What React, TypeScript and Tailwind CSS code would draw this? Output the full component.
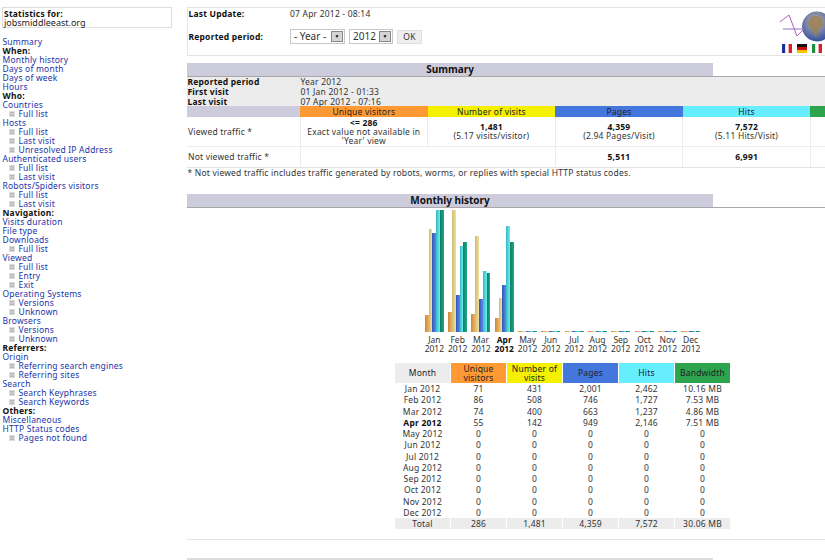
import React from "react";

const nav: [string, number][] = [
  ["Summary", 0], ["When:", 2], ["Monthly history", 0], ["Days of month", 0], ["Days of week", 0], ["Hours", 0],
  ["Who:", 2], ["Countries", 0], ["Full list", 1], ["Hosts", 0], ["Full list", 1], ["Last visit", 1],
  ["Unresolved IP Address", 1], ["Authenticated users", 0], ["Full list", 1], ["Last visit", 1],
  ["Robots/Spiders visitors", 0], ["Full list", 1], ["Last visit", 1], ["Navigation:", 2], ["Visits duration", 0],
  ["File type", 0], ["Downloads", 0], ["Full list", 1], ["Viewed", 0], ["Full list", 1], ["Entry", 1], ["Exit", 1],
  ["Operating Systems", 0], ["Versions", 1], ["Unknown", 1], ["Browsers", 0], ["Versions", 1], ["Unknown", 1],
  ["Referrers:", 2], ["Origin", 0], ["Referring search engines", 1], ["Referring sites", 1], ["Search", 0],
  ["Search Keyphrases", 1], ["Search Keywords", 1], ["Others:", 2], ["Miscellaneous", 0], ["HTTP Status codes", 0],
  ["Pages not found", 1],
];

const months = ["Jan", "Feb", "Mar", "Apr", "May", "Jun", "Jul", "Aug", "Sep", "Oct", "Nov", "Dec"];
const bars = [
  [17, 103, 99, 122, 122],
  [20, 122, 37, 86, 90],
  [18, 96, 33, 61, 59],
  [14, 34, 47, 106, 90],
];
const barClasses = [
  "bg-gradient-to-r from-[#c98a3c] to-[#f0b060]",
  "bg-gradient-to-r from-[#cdbb72] to-[#efe2a6]",
  "bg-gradient-to-r from-[#2f55b8] to-[#5f8ae8]",
  "bg-gradient-to-r from-[#35b8c0] to-[#6feef2]",
  "bg-gradient-to-r from-[#0e7f66] to-[#1fa888]",
];
const rows = [
  ["71", "431", "2,001", "2,462", "10.16 MB"],
  ["86", "508", "746", "1,727", "7.53 MB"],
  ["74", "400", "663", "1,237", "4.86 MB"],
  ["55", "142", "949", "2,146", "7.51 MB"],
];

function Mini() {
  return (
    <svg width="6" height="6" viewBox="0 0 6 6" className="mr-[4px] ml-[6px] shrink-0">
      <rect width="6" height="6" fill="#dcdcdc" />
      <path d="M1 1.5h4M1 3h4M1 4.5h4" stroke="#a8a8a8" strokeWidth="0.7" />
    </svg>
  );
}

function Flag({ a, b, c, row }: { a: string; b: string; c: string; row?: boolean }) {
  return (
    <svg width="10" height="9" viewBox="0 0 10 9">
      {row ? (
        <>
          <rect width="10" height="3" fill={a} />
          <rect y="3" width="10" height="3" fill={b} />
          <rect y="6" width="10" height="3" fill={c} />
        </>
      ) : (
        <>
          <rect width="3.4" height="9" fill={a} />
          <rect x="3.4" width="3.2" height="9" fill={b} />
          <rect x="6.6" width="3.4" height="9" fill={c} />
        </>
      )}
    </svg>
  );
}

function Logo() {
  return (
    <div className="flex flex-col w-[56px] mr-[-11px] shrink-0 mt-[3px]">
      <svg width="56" height="32" viewBox="0 0 56 32">
        <defs>
          <radialGradient id="globe" cx="0.45" cy="0.35" r="0.7">
            <stop offset="0" stopColor="#c4b08c" />
            <stop offset="0.45" stopColor="#7d86a8" />
            <stop offset="1" stopColor="#2c4a9a" />
          </radialGradient>
        </defs>
        <circle cx="37" cy="15.5" r="15" fill="url(#globe)" />
        <path d="M31 6c4-2 8-1 11 2l1 6-4 5-3 7-3-5-3-5-2-4z" fill="#9a7f52" opacity="0.8" />
        <path d="M0 11 L9 4 L17 25 L24 18" fill="none" stroke="#b060c0" strokeWidth="1" />
        <path d="M3 18 L24 18" stroke="#9070c0" strokeWidth="1" />
      </svg>
      <div className="flex gap-[5px] w-[56px] pl-[2px] mt-[1px]">
        <Flag a="#1c2c9c" b="#ffffff" c="#d8202c" />
        <Flag a="#111111" b="#cc1010" c="#f4c400" row />
        <Flag a="#189040" b="#ffffff" c="#d8202c" />
      </div>
    </div>
  );
}

function Select({ label, w }: { label: string; w: string }) {
  return (
    <div className={`${w} h-[15px] flex items-center justify-between border border-[#c8c8c8] bg-white pl-[3px] pr-[1px] text-[10px] tracking-normal text-[#333]`}>
      <span>{label}</span>
      <span className="w-[12px] h-[11px] flex items-center justify-center bg-[#d4d4d4] border border-[#888] text-[5px] leading-none text-black">▼</span>
    </div>
  );
}

function SectionHead({ title }: { title: string }) {
  return (
    <div className="border-b border-[#a8a8a8] h-[14px]">
      <div className="w-[526px] h-[13px] bg-[#ccccdd] text-center text-[10px] tracking-normal leading-[12px] font-bold text-[#111]">{title}</div>
    </div>
  );
}

export default function App() {
  return (
    <div className="w-[825px] h-[560px] overflow-hidden flex bg-white text-[8.5px] tracking-[0.2px] leading-[9px] text-[#222] [font-family:'DejaVu_Sans','Liberation_Sans',sans-serif]">
      <aside className="w-[187px] shrink-0 pt-[7px] pl-[2px]">
        <div className="w-[170px] h-[21px] border border-[#dddddd] pl-[1px] pt-[1px]">
          <div className="font-bold text-[#111]">Statistics for:</div>
          <div className="text-[9px] tracking-normal leading-[9px] text-[#222]">jobsmiddleeast.org</div>
        </div>
        <nav className="mt-[9px] ml-[0.5px]">
          {nav.map(([t, k], i) =>
            k === 2 ? (
              <div key={i} className="h-[9px] font-bold text-[#111]">{t}</div>
            ) : k === 1 ? (
              <div key={i} className="h-[9px] flex items-center text-[#2233aa]"><Mini />{t}</div>
            ) : (
              <div key={i} className="h-[9px] text-[#2233aa]">{t}</div>
            )
          )}
        </nav>
      </aside>

      <main className="flex-1 min-w-0 overflow-hidden pt-[7px]">
        <div className="w-[751px]">
          <div className="w-[638px] h-[49px] border-y border-l border-[#e4e4e4] flex justify-between">
            <div className="flex flex-col pl-[0.5px]">
              <div className="flex h-[10px] items-center">
                <span className="w-[101.5px] font-bold text-[#111]">Last Update:</span>
                <span className="text-[#333]">07 Apr 2012 - 08:14</span>
              </div>
              <div className="flex mt-[11px] items-center">
                <span className="w-[101.5px] font-bold text-[#111]">Reported period:</span>
                <div className="flex items-center gap-[4px]">
                  <Select label="- Year -" w="w-[55px]" />
                  <Select label="2012" w="w-[44px]" />
                  <span className="w-[25px] h-[14px] flex items-center justify-center bg-[#eeeeee] border border-[#e0e0e0] text-[#333]">OK</span>
                </div>
              </div>
            </div>
            <Logo />
          </div>

          <section className="mt-[7px]">
            <SectionHead title="Summary" />
            <div className="bg-[#ececec] h-[29px] flex pl-[0.5px] leading-[10px]">
              <div className="w-[113px] font-bold text-[#111]">
                <div>Reported period</div>
                <div>First visit</div>
                <div>Last visit</div>
              </div>
              <div className="text-[#333]">
                <div>Year 2012</div>
                <div>01 Jan 2012 - 01:33</div>
                <div>07 Apr 2012 - 07:16</div>
              </div>
            </div>
            <table className="table-fixed w-[751px] border-collapse border-b border-[#e4e4e4] text-center text-[#333]">
              <colgroup>
                <col className="w-[113px]" />
                <col /><col /><col /><col /><col />
              </colgroup>
              <tbody>
                <tr className="h-[11px] text-[#222]">
                  <td className="bg-[#ccccdd]" />
                  <td className="bg-[#ff9933]">Unique visitors</td>
                  <td className="bg-[#f4f000]">Number of visits</td>
                  <td className="bg-[#4477dd]">Pages</td>
                  <td className="bg-[#66eeff]">Hits</td>
                  <td className="bg-[#2ea44f]">Bandwidth</td>
                </tr>
                <tr className="h-[29px] border-b border-[#ececec]">
                  <td className="text-left pl-[1px] border-r border-[#ececec]">Viewed traffic *</td>
                  <td className="border-r border-[#ececec]"><b className="text-[#111]">&lt;= 286</b><br />Exact value not available in<br />'Year' view</td>
                  <td className="border-r border-[#ececec]"><b className="text-[#111]">1,481</b><br />(5.17 visits/visitor)</td>
                  <td className="border-r border-[#ececec]"><b className="text-[#111]">4,359</b><br />(2.94 Pages/Visit)</td>
                  <td className="border-r border-[#ececec]"><b className="text-[#111]">7,572</b><br />(5.11 Hits/Visit)</td>
                  <td><b className="text-[#111]">30.06 MB</b><br />(20.78 KB/Visit)</td>
                </tr>
                <tr className="h-[21px]">
                  <td className="text-left pl-[1px] border-r border-[#ececec]">Not viewed traffic *</td>
                  <td colSpan={2} className="border-r border-[#ececec]" />
                  <td className="border-r border-[#ececec] font-bold text-[#111]">5,511</td>
                  <td className="border-r border-[#ececec] font-bold text-[#111]">6,991</td>
                  <td className="font-bold text-[#111]">4.93 MB</td>
                </tr>
              </tbody>
            </table>
            <div className="pl-[0.5px] text-[#333]">* Not viewed traffic includes traffic generated by robots, worms, or replies with special HTTP status codes.</div>
          </section>

          <section className="mt-[17px] border-b border-[#e4e4e4] h-[346px]">
            <SectionHead title="Monthly history" />
            <div className="flex justify-center">
              <div className="flex flex-col">
                <div className="flex h-[124px] items-end">
                  {months.map((m, i) => (
                    <div key={m} className="w-[23.3px] flex items-end justify-center">
                      {(bars[i] || [1, 1, 1, 1, 1]).map((h, j) => (
                        <div key={j} className={`w-[3.8px] ${barClasses[j]}`} style={{ height: h }} />
                      ))}
                    </div>
                  ))}
                </div>
                <div className="flex text-center text-[#333] mt-[3px] tracking-normal">
                  {months.map((m, i) => (
                    <div key={m} className={`w-[23.3px] ${i === 3 ? "font-bold text-[#111]" : ""}`}>
                      {m}<br />2012
                    </div>
                  ))}
                </div>
              </div>
            </div>
            <div className="flex justify-center mt-[10px]">
              <table className="table-fixed w-[337px] border-separate border-spacing-x-[1px] border-spacing-y-0 text-center text-[#333]">
                <thead>
                  <tr className="h-[20px] text-[#222]">
                    <th className="font-normal bg-[#ececec]">Month</th>
                    <th className="font-normal bg-[#ff9933]">Unique<br />visitors</th>
                    <th className="font-normal bg-[#f4f000]">Number of<br />visits</th>
                    <th className="font-normal bg-[#4477dd]">Pages</th>
                    <th className="font-normal bg-[#66eeff]">Hits</th>
                    <th className="font-normal bg-[#2ea44f]">Bandwidth</th>
                  </tr>
                </thead>
                <tbody>
                  {months.map((m, i) => {
                    const r = rows[i] || ["0", "0", "0", "0", "0"];
                    return (
                      <tr key={m} className={i % 4 === 1 ? "h-[12px]" : "h-[11px]"}>
                        <td className={i === 3 ? "font-bold text-[#111]" : ""}>{m} 2012</td>
                        {r.map((v, j) => <td key={j}>{v}</td>)}
                      </tr>
                    );
                  })}
                  <tr className="h-[11px]">
                    {["Total", "286", "1,481", "4,359", "7,572", "30.06 MB"].map((v) => (
                      <td key={v} className="bg-[#ececec]">{v}</td>
                    ))}
                  </tr>
                </tbody>
              </table>
            </div>
          </section>
          <div className="mt-[18px] w-[526px] h-[2px] bg-[#dddddd]" />
        </div>
      </main>
    </div>
  );
}
